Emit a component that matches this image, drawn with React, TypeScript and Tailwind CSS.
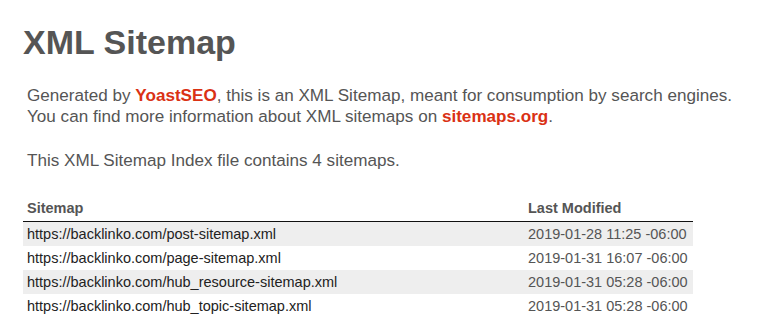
import React from 'react';

const rows = [
  { url: 'https://backlinko.com/post-sitemap.xml', mod: '2019-01-28 11:25 -06:00' },
  { url: 'https://backlinko.com/page-sitemap.xml', mod: '2019-01-31 16:07 -06:00' },
  { url: 'https://backlinko.com/hub_resource-sitemap.xml', mod: '2019-01-31 05:28 -06:00' },
  { url: 'https://backlinko.com/hub_topic-sitemap.xml', mod: '2019-01-31 05:28 -06:00' },
];

const App: React.FC = () => {
  return (
    <div className="bg-white min-h-screen w-[758px] h-[334px] overflow-hidden font-['Liberation_Sans',Arial,sans-serif] text-[#555]">
      <div className="pl-[23px] pt-[22px]">
        <h1 className="text-[34px] leading-[40px] font-bold text-[#555]">XML Sitemap</h1>

        <div className="pl-[4px] mt-[23px] text-[17.1px] leading-[21px]">
          <p>
            Generated by <span className="font-bold text-[#da3114]">YoastSEO</span>, this is an XML Sitemap, meant for consumption by search engines.
            <br />
            You can find more information about XML sitemaps on <span className="font-bold text-[#da3114]">sitemaps.org</span>.
          </p>
          <p className="mt-[23px]">This XML Sitemap Index file contains 4 sitemaps.</p>
        </div>

        <table className="mt-[27px] w-[670px] border-collapse text-[14.5px]">
          <thead>
            <tr className="border-b-[1.5px] border-[#111]">
              <th className="text-left font-bold text-[#555] pl-[4px] pb-[3px] leading-[20px]">Sitemap</th>
              <th className="text-left font-bold text-[#555] w-[165px] pb-[3px] leading-[20px]">Last Modified</th>
            </tr>
          </thead>
          <tbody>
            {rows.map((r, i) => (
              <tr key={r.url} className={i % 2 === 0 ? 'bg-[#eee]' : 'bg-white'}>
                <td className="pl-[4px] h-[24px] leading-[24px] text-[#222]">{r.url}</td>
                <td className="h-[24px] leading-[24px] text-[#555]">{r.mod}</td>
              </tr>
            ))}
          </tbody>
        </table>
      </div>
    </div>
  );
};

export default App;
